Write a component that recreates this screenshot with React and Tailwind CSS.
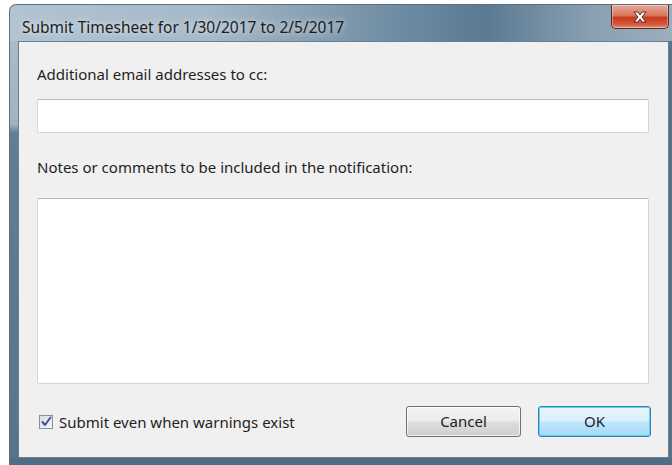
import React from "react";

const font = { fontFamily: '"Noto Sans", "Open Sans", sans-serif' };

function CloseGlyph() {
  return (
    <svg width="18" height="14" viewBox="0 0 18 14">
      <path
        d="M3 2 L7 2 L9 5 L11 2 L15 2 L11 7 L15 12 L11 12 L9 9 L7 12 L3 12 L7 7 Z"
        fill="#ffffff"
        stroke="#5a2a22"
        strokeWidth="1"
        strokeLinejoin="round"
      />
    </svg>
  );
}

function CheckBox() {
  return (
    <div className="w-[14px] h-[14px] border border-[#8f8f8f] bg-gradient-to-br from-[#dcdcdc] to-[#f6f6f6] flex items-center justify-center">
      <svg width="11" height="11" viewBox="0 0 11 11">
        <path d="M1.5 6 L4 9 L9.5 1.5" fill="none" stroke="#3b4fa8" strokeWidth="2" strokeLinecap="round" strokeLinejoin="round" />
      </svg>
    </div>
  );
}

export default function App() {
  return (
    <div className="w-[672px] h-[465px] bg-white overflow-hidden pl-[9px] pt-[4px]" style={font}>
      <div className="w-[663px] h-[461px] flex flex-col rounded-tl-[7px] border-l border-t border-[#5d6f7e] bg-[linear-gradient(90deg,#b2c3d1_0%,#a6b9c8_30%,#6c8aa1_60%,#5b7a92_72%,#8aa0b2_88%,#9aaebe_100%)] overflow-hidden">
        {/* title bar */}
        <div className="h-[36px] flex items-start relative shrink-0">
          <div className="pl-[12px] pt-[12px] text-[15.5px] leading-[20px] text-[#1c1c1c] [text-shadow:0_0_6px_rgba(255,255,255,0.9)]">
            Submit Timesheet for 1/30/2017 to 2/5/2017
          </div>
          <div className="absolute left-[601px] top-0 w-[58px] h-[24px] rounded-b-[5px] border border-t-0 border-[#5b2a24] bg-[linear-gradient(180deg,#e9a897_0%,#d9785f_45%,#c63a1f_55%,#d65a3c_85%,#e9937a_100%)] flex items-center justify-center shadow-[inset_0_0_0_1px_rgba(255,255,255,0.35)]">
            <CloseGlyph />
          </div>
        </div>
        {/* frame sides + client */}
        <div className="flex flex-1 min-h-0">
          <div className="w-[8px] shrink-0 bg-[linear-gradient(180deg,#a8bbca_0%,#9fb3c3_20%,#5f7f97_22%,#56758d_100%)]" />
          <div className="w-[651px] shrink-0 bg-[#f0f0f0] border border-[#6b7e8d] flex flex-col px-[18px]">
            <div className="pt-[22px] text-[15px] leading-[20px] text-[#1e1e1e]">
              Additional email addresses to cc:
            </div>
            <div className="mt-[15px] h-[34px] mr-[1px] bg-white border border-[#d5d5d8] border-t-[#b8b9be] rounded-[2px]" />
            <div className="mt-[24px] text-[15px] leading-[20px] text-[#1e1e1e]">
              Notes or comments to be included in the notification:
            </div>
            <div className="mt-[21px] h-[186px] mr-[1px] bg-white border border-[#d5d5d8] border-t-[#b8b9be] rounded-[2px]" />
            <div className="mt-[22px] flex items-center">
              <div className="flex items-center gap-[6px] pl-[2px] text-[15px] leading-[20px] text-[#1e1e1e]">
                <CheckBox />
                <span>Submit even when warnings exist</span>
              </div>
              <div className="ml-auto flex gap-[17px] mr-[-1px]">
                <div className="w-[115px] h-[31px] rounded-[3px] border border-[#707070] bg-[linear-gradient(180deg,#f4f4f4_0%,#ebebeb_48%,#dddddd_52%,#cfcfcf_100%)] shadow-[inset_0_0_0_1px_rgba(255,255,255,0.7)] flex items-center justify-center text-[15px] text-[#1e1e1e]">
                  Cancel
                </div>
                <div className="w-[113px] h-[31px] rounded-[3px] border border-[#3c7fb1] bg-[linear-gradient(180deg,#eaf6fd_0%,#d9f0fc_48%,#bee6fd_52%,#a7d9f5_100%)] shadow-[inset_0_0_0_1px_#5fd0f8] flex items-center justify-center text-[15px] text-[#1e1e1e]">
                  OK
                </div>
              </div>
            </div>
          </div>
          <div className="flex-1 bg-[#56758d]" />
        </div>
        <div className="h-[7px] shrink-0 bg-[#4f6d84]" />
      </div>
    </div>
  );
}
